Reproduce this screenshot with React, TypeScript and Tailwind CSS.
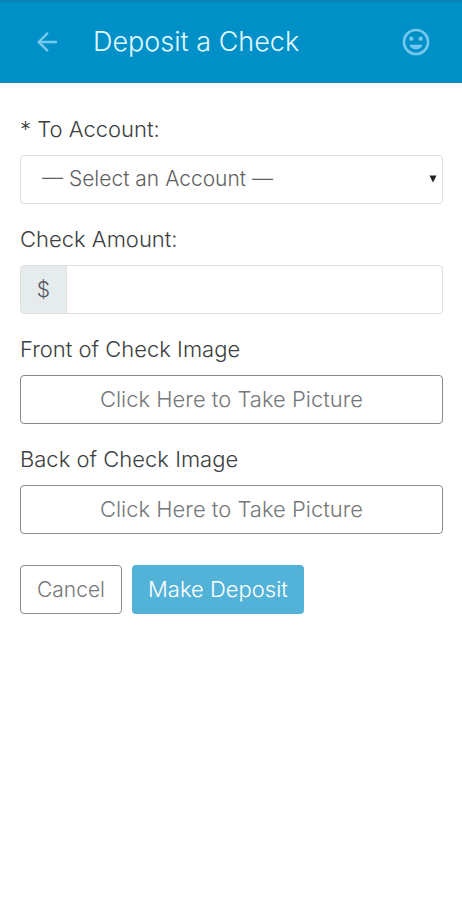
import { useState } from 'react';
import type { ReactNode } from 'react';
import { MdArrowBack } from 'react-icons/md';

const fieldClass = 'h-[49px] w-full rounded border';

function SmileIcon() {
	return (
		<svg viewBox="0 0 24 24" className="size-8" fill="currentColor" aria-hidden="true">
			<circle cx="12" cy="12" r="9" fill="none" stroke="currentColor" strokeWidth="2" />
			<rect x="7" y="8" width="3" height="3" rx="1" />
			<rect x="14" y="8" width="3" height="3" rx="1" />
			<path d="M12 17.5c2.33 0 4.31-1.46 5.11-3.5H6.89c.8 2.04 2.78 3.5 5.11 3.5z" />
		</svg>
	);
}

function Field({ id, label, children }: { id: string; label: string; children: ReactNode }) {
	return (
		<div className="flex flex-col gap-3">
			<label htmlFor={id} className="text-[22px] leading-7 text-[#3c3e40]">
				{label}
			</label>
			{children}
		</div>
	);
}

function PictureButton({ id }: { id: string }) {
	return (
		<button
			id={id}
			type="button"
			className={`${fieldClass} border-[#8a8a8a] bg-white text-[22px] text-[#757779]`}
		>
			Click Here to Take Picture
		</button>
	);
}

export default function App() {
	const [account, setAccount] = useState('');
	const [amount, setAmount] = useState('');

	return (
		<div className="min-h-screen bg-white font-['Inter',sans-serif] font-light">
			<header className="flex h-[83px] items-center border-t-2 border-b border-t-[#0f7fb8] border-b-[#1683b6] bg-[#0090c8] pr-[30px] pl-8">
				<button type="button" aria-label="Back" className="text-[#74c8ec]">
					<MdArrowBack className="size-[30px]" />
				</button>
				<h1 className="ml-[31px] flex-1 text-[27px] leading-8 text-[#e2f8ff]">Deposit a Check</h1>
				<button type="button" aria-label="Feedback" className="text-[#74c8ec]">
					<SmileIcon />
				</button>
			</header>
			<main className="pt-8 pr-[19px] pl-5">
				<form className="flex flex-col gap-[21px]" onSubmit={(e) => e.preventDefault()}>
					<Field id="account" label="* To Account:">
						<div className="relative">
							<select
								id="account"
								value={account}
								onChange={(e) => setAccount(e.target.value)}
								className={`${fieldClass} appearance-none border-[#dcdee0] bg-white pr-8 pb-[2px] pl-[21px] text-[21px] text-[#5f6163]`}
							>
								<option value="">— Select an Account —</option>
							</select>
							<svg
								viewBox="0 0 8 8"
								className="pointer-events-none absolute top-5 right-[6px] size-2"
								aria-hidden="true"
							>
								<path d="M0.5 0.5h7L4 7.5z" fill="#222" />
							</svg>
						</div>
					</Field>
					<Field id="amount" label="Check Amount:">
						<div className={`${fieldClass} flex overflow-hidden border-[#dcdee0]`}>
							<span className="flex w-[46px] items-center justify-center border-r border-[#dcdee0] bg-[#e6ebee] text-[21px] text-[#55585b]">
								$
							</span>
							<input
								id="amount"
								type="text"
								inputMode="decimal"
								value={amount}
								onChange={(e) => setAmount(e.target.value)}
								className="min-w-0 flex-1 px-4 text-[21px] text-[#5f6163] outline-none"
							/>
						</div>
					</Field>
					<Field id="front" label="Front of Check Image">
						<PictureButton id="front" />
					</Field>
					<Field id="back" label="Back of Check Image">
						<PictureButton id="back" />
					</Field>
					<div className="flex gap-[10px] pt-[10px]">
						<button
							type="button"
							className="h-[49px] rounded border border-[#8a8a8a] bg-white px-4 text-[21px] text-[#757779]"
						>
							Cancel
						</button>
						<button
							type="submit"
							className="h-[49px] rounded bg-[#52b2d8] px-4 text-[22px] text-white"
						>
							Make Deposit
						</button>
					</div>
				</form>
			</main>
		</div>
	);
}
